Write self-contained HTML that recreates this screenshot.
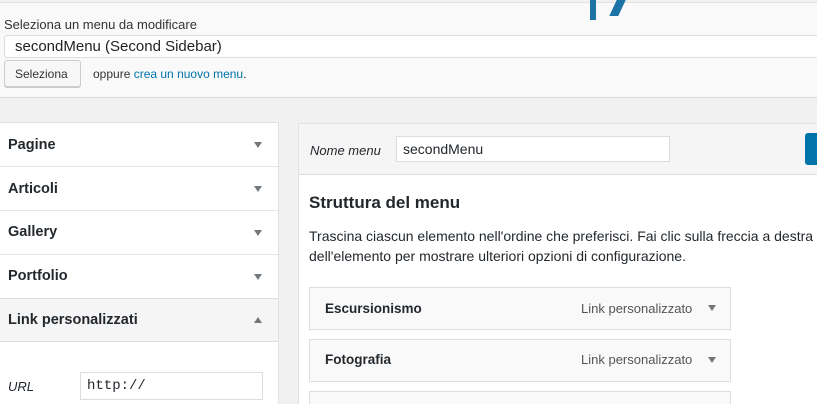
<!DOCTYPE html>
<html><head><style>
*{box-sizing:border-box;margin:0;padding:0}
html,body{width:817px;height:404px;overflow:hidden}
body{background:#f1f1f1;font-family:"Liberation Sans",sans-serif;color:#23282d;position:relative}
.abs{position:absolute}
.dn{position:absolute;width:0;height:0;border-left:4px solid transparent;border-right:4px solid transparent;border-top:6px solid #72777c}
.up{position:absolute;width:0;height:0;border-left:4px solid transparent;border-right:4px solid transparent;border-bottom:6px solid #72777c}
</style></head><body>
<div class="abs" style="left:0;top:2px;width:817px;height:96px;background:#f9f9f9;border-top:1px solid #e2e2e2;border-bottom:1px solid #dcdcdc"></div>
<div class="abs" style="left:590px;top:0;width:6px;height:20px;background:#1e73a6"></div>
<div class="abs" style="left:613px;top:0;width:9px;height:16px;background:#1e73a6;transform:skewX(-25deg)"></div>
<div class="abs" style="left:4px;top:17px;font-size:13px;color:#333">Seleziona un menu da modificare</div>
<div class="abs" style="left:4px;top:35px;width:813px;height:23px;background:#fff;border:1px solid #ddd;border-right:none;border-radius:3px 0 0 3px;font-size:15px;padding:2px 0 0 10px;color:#222">secondMenu (Second Sidebar)</div>
<div class="abs" style="left:4px;top:60px;width:77px;height:27px;background:#f7f7f7;border:1px solid #ccc;border-radius:3px;box-shadow:0 1px 0 #ccc;font-size:12px;padding:6px 0 0 10px;color:#333">Seleziona</div>
<div class="abs" style="left:93px;top:67px;font-size:12px;color:#333">oppure <span style="color:#0073aa">crea un nuovo menu</span>.</div>

<div class="abs" style="left:0;top:122px;width:279px;height:282px;background:#fff;border:1px solid #e2e2e2;border-left:none;border-bottom:none"></div>
<div class="abs" style="left:0;top:298px;width:278px;height:44px;background:#f5f5f5;border-top:1px solid #ddd;border-bottom:1px solid #ddd"></div>
<div class="abs" style="left:0;top:166px;width:278px;border-top:1px solid #e5e5e5"></div>
<div class="abs" style="left:0;top:210px;width:278px;border-top:1px solid #e5e5e5"></div>
<div class="abs" style="left:0;top:254px;width:278px;border-top:1px solid #e5e5e5"></div>
<div class="abs" style="left:8px;top:137px;font-size:14.5px;font-weight:bold">Pagine</div>
<div class="abs" style="left:8px;top:181px;font-size:14.5px;font-weight:bold">Articoli</div>
<div class="abs" style="left:8px;top:224px;font-size:14.5px;font-weight:bold">Gallery</div>
<div class="abs" style="left:8px;top:268px;font-size:14.5px;font-weight:bold">Portfolio</div>
<div class="abs" style="left:8px;top:312px;font-size:14.5px;font-weight:bold">Link personalizzati</div>
<div class="dn" style="left:254px;top:142px"></div>
<div class="dn" style="left:254px;top:186px"></div>
<div class="dn" style="left:254px;top:230px"></div>
<div class="dn" style="left:254px;top:274px"></div>
<div class="up" style="left:254px;top:317px"></div>
<div class="abs" style="left:8px;top:379px;font-size:13px;font-style:italic">URL</div>
<div class="abs" style="left:80px;top:372px;width:183px;height:28px;background:#fff;border:1px solid #ddd;font-family:'Liberation Mono',monospace;font-size:14px;padding:5px 0 0 6px">http://</div>

<div class="abs" style="left:298px;top:123px;width:519px;height:281px;background:#fff;border:1px solid #e2e2e2;border-right:none;border-bottom:none"></div>
<div class="abs" style="left:299px;top:124px;width:518px;height:51px;background:#f5f5f5;border-bottom:1px solid #ddd"></div>
<div class="abs" style="left:310px;top:143px;font-size:13px;font-style:italic">Nome menu</div>
<div class="abs" style="left:396px;top:136px;width:274px;height:26px;background:#fff;border:1px solid #ddd;font-size:14px;padding:4px 0 0 6px">secondMenu</div>
<div class="abs" style="left:805px;top:133px;width:12px;height:32px;background:#0073aa;border-radius:3px 0 0 3px"></div>
<div class="abs" style="left:309px;top:193px;font-size:17px;font-weight:bold">Struttura del menu</div>
<div class="abs" style="left:309px;top:226px;width:508px;overflow:hidden;font-size:14px;line-height:20px;white-space:nowrap">Trascina ciascun elemento nell'ordine che preferisci. Fai clic sulla freccia a destra<br>dell'elemento per mostrare ulteriori opzioni di configurazione.</div>
<div class="abs" style="left:309px;top:287px;width:422px;height:43px;background:#f9f9f9;border:1px solid #ddd"></div>
<div class="abs" style="left:309px;top:339px;width:422px;height:43px;background:#f9f9f9;border:1px solid #ddd"></div>
<div class="abs" style="left:309px;top:391px;width:422px;height:13px;background:#f9f9f9;border:1px solid #ddd;border-bottom:none"></div>
<div class="abs" style="left:325px;top:301px;font-size:13.5px;font-weight:bold">Escursionismo</div>
<div class="abs" style="left:325px;top:352px;font-size:13.5px;font-weight:bold">Fotografia</div>
<div class="abs" style="left:581px;top:301px;font-size:13px;color:#555">Link personalizzato</div>
<div class="abs" style="left:581px;top:352px;font-size:13px;color:#555">Link personalizzato</div>
<div class="dn" style="left:708px;top:305px"></div>
<div class="dn" style="left:708px;top:357px"></div>
</body></html>
